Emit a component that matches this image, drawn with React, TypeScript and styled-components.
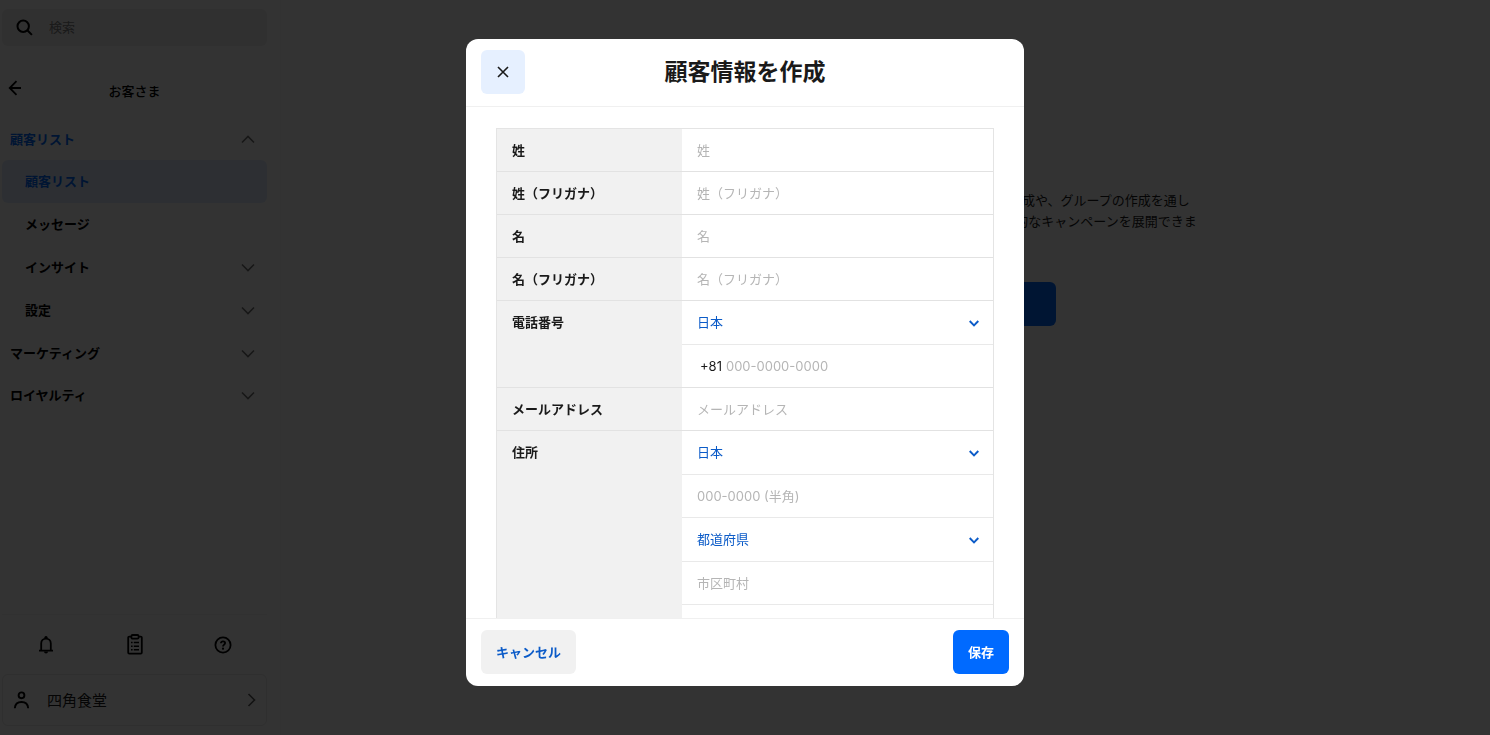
import React from "react";
import styled, { createGlobalStyle } from "styled-components";

const GlobalStyle = createGlobalStyle`
  * { box-sizing: border-box; }
  html, body { margin: 0; height: 100%; }
  body {
    background: #fff;
    color: #1a1a1a;
    font: 13px/21px Inter, "Noto Sans CJK JP", sans-serif;
    overflow: hidden;
  }
  button, input, select { font: inherit; color: inherit; }
  button { border: 0; background: none; padding: 0; cursor: pointer; }
`;

const Page = styled.div`
  display: flex;
  min-height: 100vh;
`;

const Sidebar = styled.aside`
  display: flex;
  flex-direction: column;
  flex: 0 0 247px;
  height: 100vh;
  padding: 9px 13px 9px 2px;
  border-right: 1px solid #f7f7f7;
`;

const SearchBox = styled.label`
  display: flex;
  align-items: center;
  gap: 14px;
  height: 37px;
  padding: 0 14px;
  border-radius: 6px;
  background: #f0f0f0;
`;

const SearchInput = styled.input`
  flex: 1;
  min-width: 0;
  border: 0;
  outline: 0;
  background: none;
  &::placeholder { color: #808080; opacity: 1; }
`;

const SectionHeader = styled.div`
  display: grid;
  grid-template-columns: 22px 1fr 22px;
  align-items: center;
  height: 44px;
  margin: 23px 0 5px;
`;

const SectionTitle = styled.h2`
  margin: 0;
  font-size: 13px;
  font-weight: 500;
  text-align: center;
  color: #000;
`;

const Nav = styled.nav`
  display: flex;
  flex-direction: column;
`;

const NavItem = styled.a<{ $nested?: boolean; $blue?: boolean; $active?: boolean }>`
  display: flex;
  align-items: center;
  justify-content: space-between;
  height: ${(p) => (p.$nested ? 43 : 42)}px;
  padding: 0 12px 0 ${(p) => (p.$nested ? 23 : 8)}px;
  border-radius: 6px;
  font-weight: 700;
  text-decoration: none;
  color: ${(p) => (p.$blue ? "#006aff" : "#000")};
  background: ${(p) => (p.$active ? "#e0ecff" : "transparent")};
  svg { color: #737373; }
`;

const SidebarFooter = styled.div`
  margin-top: auto;
  border-top: 1px solid #f2f2f2;
`;

const Tools = styled.div`
  display: flex;
  justify-content: space-between;
  align-items: center;
  height: 59px;
  padding: 0 35px;
  button { display: flex; }
`;

const Account = styled.button`
  display: flex;
  align-items: center;
  width: 100%;
  height: 52px;
  padding: 0 10px;
  border: 1px solid #e8e8e8;
  border-radius: 6px;
  font-size: 15px;
  text-align: left;
  span { flex: 1; margin-left: 17px; }
  svg:last-child { color: #595959; }
`;

const Main = styled.main`
  display: flex;
  flex-direction: column;
  align-items: center;
  flex: 1;
  padding-top: 190px;
`;

const Lead = styled.p`
  margin: 0;
  text-align: center;
  white-space: nowrap;
`;

const LeadButton = styled.button`
  width: 340px;
  height: 44px;
  margin-top: 29px;
  border-radius: 6px;
  background: #006aff;
  color: #fff;
  font-weight: 700;
`;

const Overlay = styled.div`
  position: fixed;
  inset: 0;
  display: flex;
  justify-content: center;
  padding: 39px 16px 49px;
  background: rgba(0, 0, 0, 0.8);
`;

const Dialog = styled.section`
  display: flex;
  flex-direction: column;
  width: 100%;
  max-width: 558px;
  overflow: hidden;
  border-radius: 12px;
  background: #fff;
`;

const DialogHeader = styled.header`
  display: grid;
  grid-template-columns: 44px 1fr 44px;
  align-items: center;
  padding: 11px 15px 12px;
  border-bottom: 1px solid #f0f0f0;
`;

const DialogTitle = styled.h1`
  margin: 0;
  font-size: 23px;
  line-height: 32px;
  font-weight: 700;
  text-align: center;
`;

const CloseButton = styled.button`
  display: flex;
  align-items: center;
  justify-content: center;
  height: 44px;
  border-radius: 6px;
  background: #e6f0ff;
`;

const DialogBody = styled.div`
  flex: 1;
  min-height: 0;
  padding: 21px 30px;
  overflow-y: auto;
  scrollbar-width: none;
`;

const DialogFooter = styled.footer`
  display: flex;
  justify-content: space-between;
  padding: 11px 15px 12px;
  border-top: 1px solid #f0f0f0;
`;

const FooterButton = styled.button<{ $primary?: boolean }>`
  height: 44px;
  padding: 0 15px;
  border-radius: 6px;
  font-weight: 700;
  background: ${(p) => (p.$primary ? "#006aff" : "#f1f1f1")};
  color: ${(p) => (p.$primary ? "#fff" : "#0b5bc8")};
`;

const FormTable = styled.form`
  border: 1px solid #e4e4e4;
  border-bottom: 0;
`;

const Group = styled.div`
  display: grid;
  grid-template-columns: 185px 1fr;
  border-bottom: 1px solid #e2e2e2;
`;

const GroupLabel = styled.label`
  padding: 11px 15px 10px;
  background: #f1f1f1;
  font-weight: 700;
`;

const Line = styled.div<{ $select?: boolean }>`
  display: flex;
  align-items: center;
  position: relative;
  height: ${(p) => (p.$select ? 44 : 43)}px;
  border-bottom: 1px solid #e9e9e9;
  &:last-child { height: 42px; border-bottom: 0; }
`;

const TextInput = styled.input`
  flex: 1;
  min-width: 0;
  height: 100%;
  padding: 0 15px;
  border: 0;
  outline: 0;
  background: none;
  &::placeholder { color: #b5b5b5; opacity: 1; }
`;

const Prefix = styled.span`
  padding-left: 18px;
  & + input { padding-left: 4px; }
`;

const Select = styled.select`
  flex: 1;
  height: 100%;
  padding: 0 15px;
  border: 0;
  outline: 0;
  appearance: none;
  background: none;
  color: #0b5bc8;
`;

const SelectArrow = styled.span`
  position: absolute;
  right: 13px;
  top: 18px;
  display: flex;
  color: #0b5bc8;
  pointer-events: none;
`;

type ChevronProps = { dir: "up" | "down" | "right" };

const Chevron = ({ dir }: ChevronProps) => {
  const d = { up: "M1 7.5 7 1.5l6 6", down: "M1 1.5l6 6 6-6", right: "M1.5 1l6 6-6 6" }[dir];
  const [w, h] = dir === "right" ? [9, 14] : [14, 9];
  return (
    <svg width={w} height={h} viewBox={`0 0 ${w} ${h}`} fill="none" stroke="currentColor" strokeWidth="1.6" aria-hidden>
      <path d={d} />
    </svg>
  );
};

const SearchIcon = () => (
  <svg width="17" height="17" viewBox="0 0 17 17" fill="none" stroke="#000" strokeWidth="2" aria-hidden>
    <circle cx="7.2" cy="7.2" r="5.7" />
    <path d="M11.3 11.3l4.6 4.6" />
  </svg>
);

const BackIcon = () => (
  <svg width="16" height="16" viewBox="0 0 16 16" fill="none" stroke="#000" strokeWidth="1.8" aria-hidden>
    <path d="M8.5 1.2 1.7 8l6.8 6.8M2 8h12.8" transform="translate(3 0)" />
  </svg>
);

const BellIcon = () => (
  <svg width="18" height="20" viewBox="0 0 18 20" fill="none" stroke="#000" strokeWidth="1.8" aria-hidden>
    <path d="M2 15.6h14M4.2 15.3V8.4a4.8 4.8 0 0 1 9.6 0v6.9" />
    <path d="M7.4 3.2a1.7 1.7 0 1 1 3.2 0zM7 16.4h4a2 2 0 0 1-4 0z" fill="#000" stroke="none" />
  </svg>
);

const ClipboardIcon = () => (
  <svg width="16" height="21" viewBox="0 0 16 21" fill="none" stroke="#000" strokeWidth="1.8" aria-hidden>
    <path d="M4 2.6H2.2a1 1 0 0 0-1 1v15a1 1 0 0 0 1 1h11.6a1 1 0 0 0 1-1v-15a1 1 0 0 0-1-1H12" />
    <rect x="4.4" y="1" width="7.2" height="3.6" rx="1.2" />
    <path d="M4 8.6h1.6M6.8 8.6h5.2M4 12.2h1.6M6.8 12.2h5.2M4 15.8h1.6M6.8 15.8h5.2" strokeWidth="1.5" />
  </svg>
);

const HelpIcon = () => (
  <svg width="18" height="18" viewBox="0 0 18 18" fill="none" stroke="#000" strokeWidth="1.8" aria-hidden>
    <circle cx="9" cy="9" r="7.6" />
    <path d="M6.9 7.3c0-1.3.9-2 2.1-2s2.1.7 2.1 1.8c0 1.5-2.1 1.6-2.1 3.4" />
    <circle cx="9" cy="12.7" r="1.1" fill="#000" stroke="none" />
  </svg>
);

const PersonIcon = () => (
  <svg width="17" height="18" viewBox="0 0 17 18" fill="none" stroke="#000" strokeWidth="1.9" aria-hidden>
    <circle cx="8.5" cy="4.3" r="2.9" />
    <path d="M1.8 17.2c.3-3.8 3-6.2 6.7-6.2s6.400 2.400 6.700 6.200" />
  </svg>
);

const CloseIcon = () => (
  <svg width="12" height="12" viewBox="0 0 12 12" fill="none" stroke="#1a1a1a" strokeWidth="1.6" aria-hidden>
    <path d="M1 1l10 10M11 1 1 11" />
  </svg>
);

const ArrowIcon = () => (
  <svg width="12" height="9" viewBox="0 0 12 9" fill="none" stroke="currentColor" strokeWidth="1.9" aria-hidden>
    <path d="M1.700 2l4.300 4.300L10.300 2" />
  </svg>
);

type Field = { kind: "text" | "select" | "phone"; text: string };
type FieldGroup = { id: string; label: string; fields: Field[] };

const groups: FieldGroup[] = [
  { id: "last", label: "姓", fields: [{ kind: "text", text: "姓" }] },
  { id: "last-kana", label: "姓（フリガナ）", fields: [{ kind: "text", text: "姓（フリガナ）" }] },
  { id: "first", label: "名", fields: [{ kind: "text", text: "名" }] },
  { id: "first-kana", label: "名（フリガナ）", fields: [{ kind: "text", text: "名（フリガナ）" }] },
  {
    id: "phone",
    label: "電話番号",
    fields: [
      { kind: "select", text: "日本" },
      { kind: "phone", text: "000-0000-0000" },
    ],
  },
  { id: "email", label: "メールアドレス", fields: [{ kind: "text", text: "メールアドレス" }] },
  {
    id: "address",
    label: "住所",
    fields: [
      { kind: "select", text: "日本" },
      { kind: "text", text: "000-0000 (半角)" },
      { kind: "select", text: "都道府県" },
      { kind: "text", text: "市区町村" },
      { kind: "text", text: "番地" },
    ],
  },
];

const FieldLine = ({ field, id, label }: { field: Field; id: string; label: string }) => (
  <Line $select={field.kind === "select"}>
    {field.kind === "select" ? (
      <>
        <Select id={id} aria-label={`${label} ${field.text}`}>
          <option>{field.text}</option>
        </Select>
        <SelectArrow>
          <ArrowIcon />
        </SelectArrow>
      </>
    ) : (
      <>
        {field.kind === "phone" && <Prefix>+81</Prefix>}
        <TextInput id={id} placeholder={field.text} aria-label={`${label} ${field.text}`} />
      </>
    )}
  </Line>
);

export default function App() {
  return (
    <>
      <GlobalStyle />
      <Page>
        <Sidebar>
          <SearchBox>
            <SearchIcon />
            <SearchInput placeholder="検索" aria-label="検索" />
          </SearchBox>
          <SectionHeader>
            <button aria-label="戻る">
              <BackIcon />
            </button>
            <SectionTitle>お客さま</SectionTitle>
          </SectionHeader>
          <Nav>
            <NavItem href="#" $blue>
              顧客リスト
              <Chevron dir="up" />
            </NavItem>
            <NavItem href="#" $nested $blue $active>
              顧客リスト
            </NavItem>
            <NavItem href="#" $nested>
              メッセージ
            </NavItem>
            <NavItem href="#" $nested>
              インサイト
              <Chevron dir="down" />
            </NavItem>
            <NavItem href="#" $nested>
              設定
              <Chevron dir="down" />
            </NavItem>
            <NavItem href="#">
              マーケティング
              <Chevron dir="down" />
            </NavItem>
            <NavItem href="#">
              ロイヤルティ
              <Chevron dir="down" />
            </NavItem>
          </Nav>
          <SidebarFooter>
            <Tools>
              <button aria-label="通知">
                <BellIcon />
              </button>
              <button aria-label="タスク">
                <ClipboardIcon />
              </button>
              <button aria-label="ヘルプ">
                <HelpIcon />
              </button>
            </Tools>
            <Account>
              <PersonIcon />
              <span>四角食堂</span>
              <Chevron dir="right" />
            </Account>
          </SidebarFooter>
        </Sidebar>
        <Main>
          <Lead>
            お店をご利用いただいたお客さまの情報をまとめて管理できます。リスト作成や、グループの作成を通し
            <br />
            て、お客さま一人ひとりに合わせたご案内やお得な特典を届けるための効果的なキャンペーンを展開できま
            <br />
            す。
          </Lead>
          <LeadButton>顧客情報を作成</LeadButton>
        </Main>
      </Page>
      <Overlay>
        <Dialog role="dialog" aria-modal="true" aria-labelledby="dialog-title">
          <DialogHeader>
            <CloseButton aria-label="閉じる">
              <CloseIcon />
            </CloseButton>
            <DialogTitle id="dialog-title">顧客情報を作成</DialogTitle>
          </DialogHeader>
          <DialogBody>
            <FormTable>
              {groups.map((g) => (
                <Group key={g.id}>
                  <GroupLabel htmlFor={`${g.id}-0`}>{g.label}</GroupLabel>
                  <div>
                    {g.fields.map((f, i) => (
                      <FieldLine key={i} field={f} id={`${g.id}-${i}`} label={g.label} />
                    ))}
                  </div>
                </Group>
              ))}
            </FormTable>
          </DialogBody>
          <DialogFooter>
            <FooterButton>キャンセル</FooterButton>
            <FooterButton $primary>保存</FooterButton>
          </DialogFooter>
        </Dialog>
      </Overlay>
    </>
  );
}
